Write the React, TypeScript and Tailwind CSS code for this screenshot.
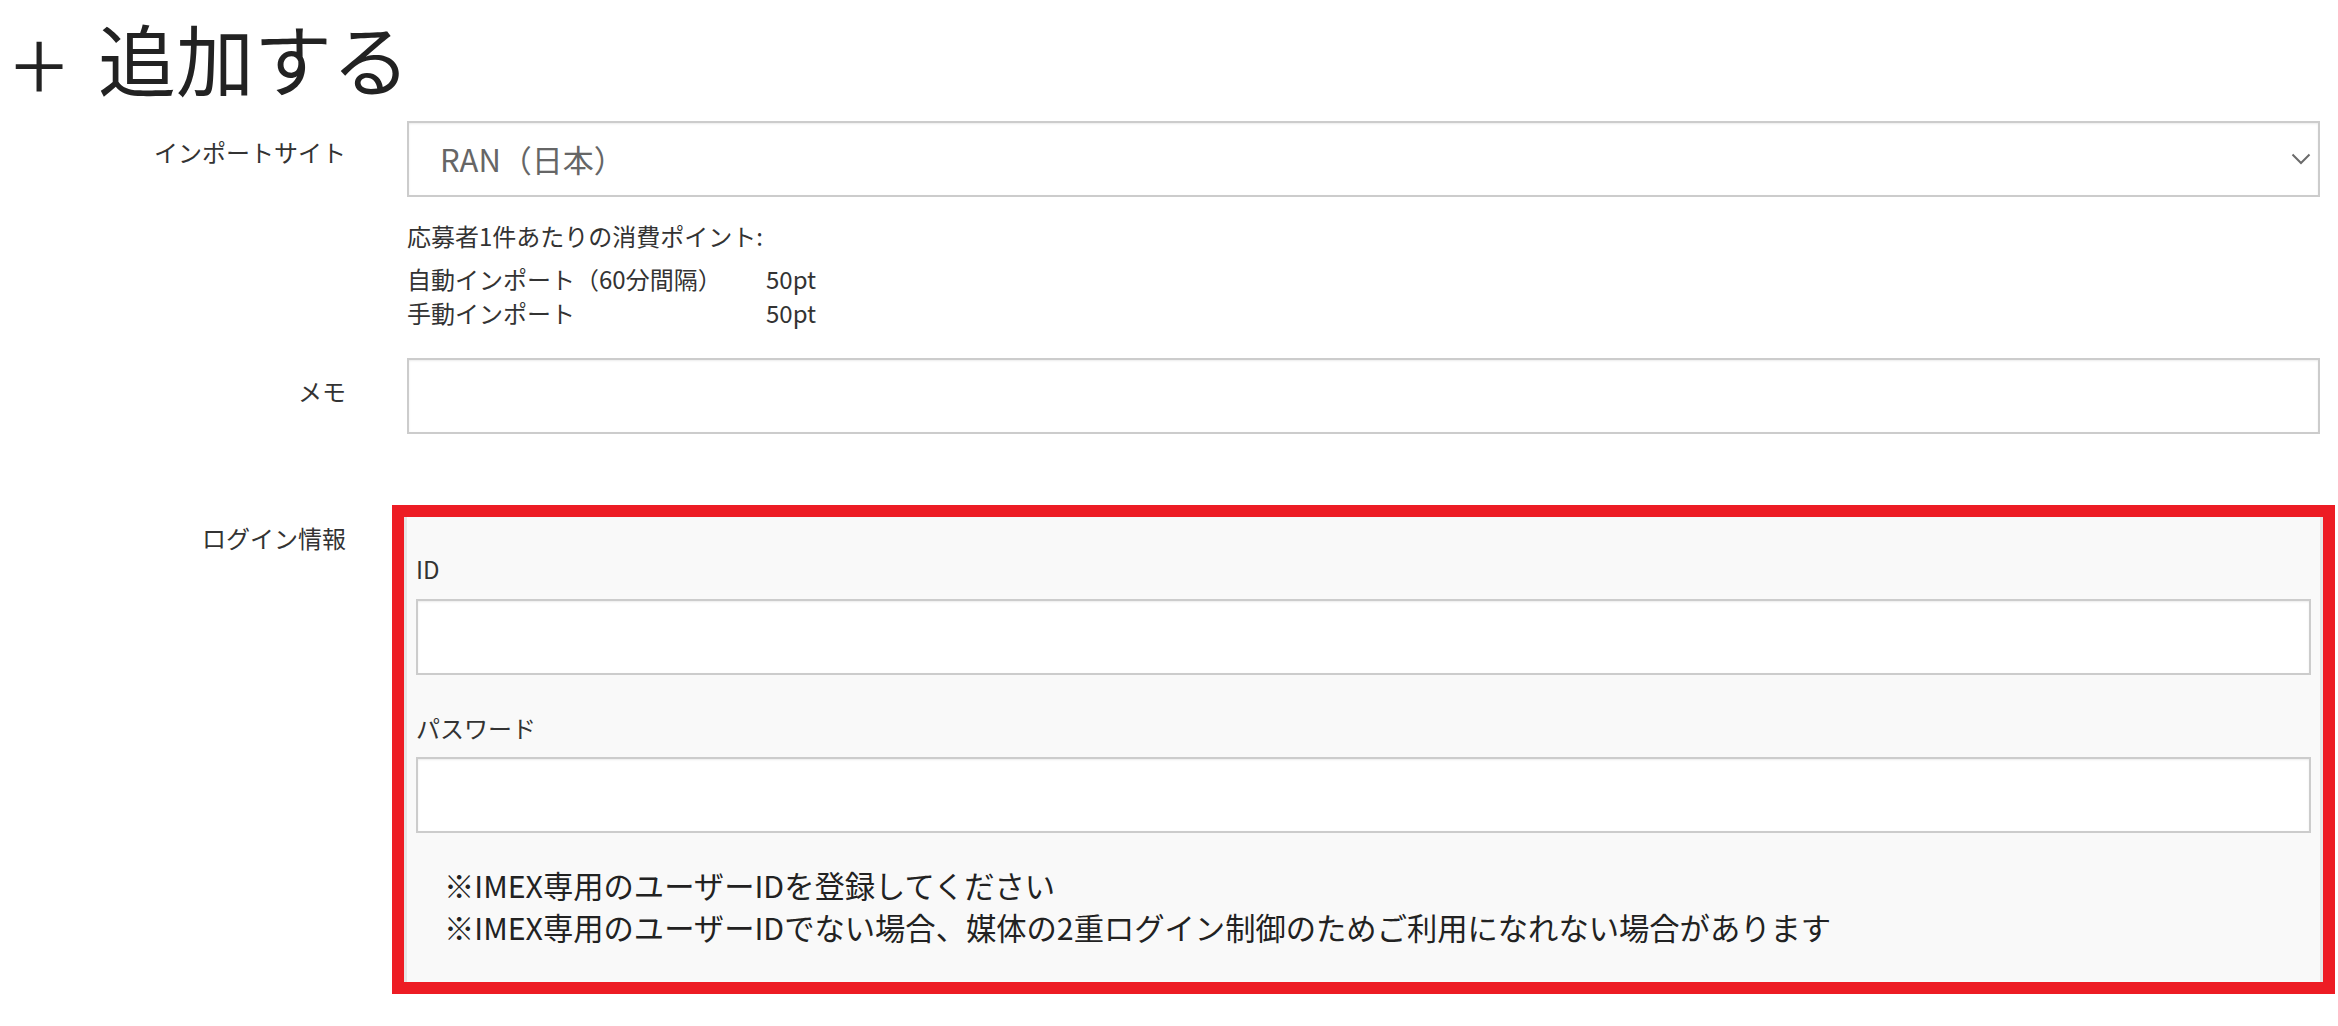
import React from "react";

function Chevron() {
  return (
    <svg width="20" height="12" viewBox="0 0 20 12" fill="none">
      <path d="M1.5 1.5 L10 10 L18.5 1.5" stroke="#6b6b6b" strokeWidth="2" />
    </svg>
  );
}

export default function App() {
  return (
    <div className="min-h-screen bg-white text-[#333333] font-['Noto_Sans_CJK_JP','Liberation_Sans',sans-serif]">
      <div className="pr-[18px]">
        <h1 className="pl-[12px] h-[114px] font-normal text-[#222222] flex text-[78px] leading-[114px]">
          <span className="w-[86px]">
            <span className="inline-block font-light scale-[1.3] origin-[left_center] translate-y-[3px]">+</span>
          </span>
          <span>追加する</span>
        </h1>

        {/* インポートサイト */}
        <div className="mt-[7px] flex gap-[61px]">
          <div className="w-[346px] shrink-0 text-right text-[24px] leading-[36px] pt-[13px]">
            インポートサイト
          </div>
          <div className="flex-1 min-w-0">
            <div className="h-[76px] border-2 border-[#cccccc] bg-white shadow-[inset_0_1px_2px_rgba(0,0,0,0.08)] flex items-center justify-between pl-[31px] pr-[7px]">
              <span className="text-[31px] text-[#666666]">RAN（日本）</span>
              <Chevron />
            </div>
            <div className="mt-[22px] text-[24px] leading-[34px]">
              <p>応募者1件あたりの消費ポイント:</p>
              <div className="mt-[9px] grid grid-cols-[359px_auto]">
                <span>自動インポート（60分間隔）</span>
                <span>50pt</span>
                <span>手動インポート</span>
                <span>50pt</span>
              </div>
            </div>
          </div>
        </div>

        {/* メモ */}
        <div className="mt-[28px] flex gap-[61px]">
          <div className="w-[346px] shrink-0 text-right text-[24px] leading-[36px] pt-[15px]">
            メモ
          </div>
          <div className="flex-1 min-w-0">
            <div className="h-[76px] border-2 border-[#cccccc] bg-white shadow-[inset_0_1px_2px_rgba(0,0,0,0.08)]" />
          </div>
        </div>

        {/* ログイン情報 */}
        <div className="mt-[71px] flex gap-[61px]">
          <div className="w-[346px] shrink-0 text-right text-[24px] leading-[36px] pt-[15px]">
            ログイン情報
          </div>
          <div className="flex-1 min-w-0">
            <div className="mx-[-15px] border-[12px] border-[#ed1c24]">
              <div className="border-x-[3px] border-[#e6e6e6] bg-[#f9f9f9] px-[9px] pt-[34px] pb-[34px]">
                <div className="text-[24px] leading-[36px]">ID</div>
                <div className="mt-[12px] h-[76px] border-2 border-[#cccccc] bg-white shadow-[inset_0_1px_2px_rgba(0,0,0,0.08)]" />
                <div className="mt-[35px] text-[24px] leading-[36px]">パスワード</div>
                <div className="mt-[11px] h-[76px] border-2 border-[#cccccc] bg-white shadow-[inset_0_1px_2px_rgba(0,0,0,0.08)]" />
                <div className="mt-[31px] pl-[28px] text-[30.3px] leading-[42px] text-[#222222]">
                  <p>※IMEX専用のユーザーIDを登録してください</p>
                  <p>※IMEX専用のユーザーIDでない場合、媒体の2重ログイン制御のためご利用になれない場合があります</p>
                </div>
              </div>
            </div>
          </div>
        </div>
      </div>
    </div>
  );
}
